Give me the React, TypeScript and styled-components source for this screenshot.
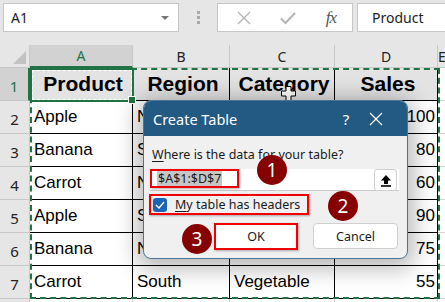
import React from "react";
import styled, { createGlobalStyle } from "styled-components";

const GlobalStyle = createGlobalStyle`
  html, body { margin: 0; padding: 0; }
  body {
    font-family: "Liberation Sans", Arial, sans-serif;
    background: #fff;
  }
`;

const Screen = styled.div`
  position: relative;
  width: 445px;
  height: 302px;
  overflow: hidden;
  background: #fff;
`;

/* ---------- formula bar ---------- */

const Toolbar = styled.div`
  display: flex;
  align-items: flex-start;
  height: 45px;
  padding: 3px 0 0 3px;
  box-sizing: border-box;
  background: #e6e6e6;
`;

const NameBox = styled.div`
  width: 176px;
  height: 29px;
  box-sizing: border-box;
  display: flex;
  align-items: center;
  justify-content: space-between;
  padding: 0 9px 0 7px;
  background: #fff;
  border: 1px solid #c6c6c6;
  font-family: "Noto Sans", sans-serif;
  font-size: 14px;
  color: #222;
`;

const Caret = styled.span`
  width: 0;
  height: 0;
  border-left: 4px solid transparent;
  border-right: 4px solid transparent;
  border-top: 4px solid #777;
`;

const Grip = styled.div`
  width: 38px;
  height: 29px;
  display: flex;
  flex-direction: column;
  align-items: center;
  justify-content: center;
  gap: 2px;
  span {
    width: 3px;
    height: 3px;
    background: #a8a8a8;
  }
`;

const FxButtons = styled.div`
  width: 136px;
  height: 29px;
  box-sizing: border-box;
  display: flex;
  align-items: center;
  justify-content: space-between;
  padding: 0 16px 0 19px;
  background: #fff;
  border: 1px solid #c6c6c6;
`;

const FxLabel = styled.span`
  font-family: "Liberation Serif", serif;
  font-style: italic;
  font-size: 17px;
  color: #555;
  letter-spacing: -1px;
`;

const FormulaInput = styled.div`
  flex: 1;
  height: 29px;
  margin-left: 4px;
  box-sizing: border-box;
  display: flex;
  align-items: center;
  padding-left: 14px;
  background: #fff;
  border: 1px solid #c6c6c6;
  border-right: none;
  font-family: "Noto Sans", sans-serif;
  font-size: 14px;
  color: #222;
`;

/* ---------- sheet ---------- */

const Sheet = styled.div`
  display: grid;
  grid-template-columns: 30px 103px 97px 105px 103px 1fr;
  grid-template-rows: 23px repeat(8, 33px);
`;

const Corner = styled.div`
  background: #e6e6e6;
  border-right: 1px solid #c8c8c8;
  border-bottom: 1px solid #c8c8c8;
  box-sizing: border-box;
  position: relative;
  &::after {
    content: "";
    position: absolute;
    right: 3px;
    bottom: 3px;
    width: 0;
    height: 0;
    border-left: 13px solid transparent;
    border-bottom: 13px solid #c2c2c2;
  }
`;

const ColHead = styled.div<{ $active?: boolean }>`
  display: flex;
  align-items: center;
  justify-content: center;
  box-sizing: border-box;
  background: ${(p) => (p.$active ? "#d2d2d2" : "#e6e6e6")};
  border-right: 1px solid #c8c8c8;
  border-bottom: ${(p) => (p.$active ? "2px solid #217346" : "1px solid #c8c8c8")};
  font-family: "Noto Sans", sans-serif;
  font-size: 14px;
  color: ${(p) => (p.$active ? "#217346" : "#222")};
`;

const RowHead = styled.div<{ $active?: boolean }>`
  display: flex;
  align-items: flex-end;
  justify-content: center;
  padding-bottom: 4px;
  box-sizing: border-box;
  background: ${(p) => (p.$active ? "#d2d2d2" : "#e6e6e6")};
  border-right: ${(p) => (p.$active ? "2px solid #217346" : "1px solid #c8c8c8")};
  border-bottom: 1px solid #c8c8c8;
  font-family: "Noto Sans", sans-serif;
  font-size: 15px;
  color: ${(p) => (p.$active ? "#217346" : "#222")};
`;

const Cell = styled.div<{ $head?: boolean; $num?: boolean; $empty?: boolean }>`
  display: flex;
  align-items: center;
  justify-content: ${(p) => (p.$head ? "center" : p.$num ? "flex-end" : "flex-start")};
  padding: ${(p) => (p.$num ? "0 2px 0 0" : "0 0 0 4px")};
  box-sizing: border-box;
  white-space: nowrap;
  overflow: hidden;
  background: ${(p) => (p.$head ? "#e3e3e3" : "#fff")};
  border-right: 1px solid ${(p) => (p.$empty ? "#d4d4d4" : "#000")};
  border-bottom: 1px solid ${(p) => (p.$empty ? "#d4d4d4" : "#000")};
  font-size: ${(p) => (p.$head ? "21px" : "17px")};
  font-weight: ${(p) => (p.$head ? 700 : 400)};
  color: #000;
`;

const CopyMarquee = styled.div`
  position: absolute;
  left: 30px;
  top: 68px;
  width: 410px;
  height: 231px;
  box-sizing: border-box;
  border: 2px dashed #217346;
  pointer-events: none;
`;

const ActiveCell = styled.div`
  position: absolute;
  left: 30px;
  top: 68px;
  width: 104px;
  height: 34px;
  box-sizing: border-box;
  border: 2px solid #217346;
  outline: 1px dashed #fff;
  outline-offset: -3px;
  &::after {
    content: "";
    position: absolute;
    right: -4px;
    bottom: -4px;
    width: 6px;
    height: 6px;
    background: #217346;
    border: 1px solid #fff;
  }
`;

/* ---------- dialog ---------- */

const Dialog = styled.div`
  position: absolute;
  left: 143px;
  top: 100px;
  width: 265px;
  height: 159px;
  box-sizing: border-box;
  border-radius: 8px;
  border: 1px solid #4d7494;
  background: #f0f0f0;
  overflow: hidden;
  box-shadow: 0 4px 22px 6px rgba(0, 0, 0, 0.28);
  font-family: "Noto Sans", "Open Sans", sans-serif;
  color: #1a1a1a;
`;

const TitleBar = styled.div`
  height: 35px;
  display: flex;
  align-items: center;
  padding: 0 16px 0 9px;
  background: #235a84;
  color: #fff;
  font-size: 14.5px;
`;

const Title = styled.span`
  flex: 1;
`;

const TitleButton = styled.span`
  width: 30px;
  display: flex;
  justify-content: center;
  font-size: 15px;
`;

const Body = styled.div`
  display: flex;
  flex-direction: column;
  padding: 10px 8px 0 6px;
`;

const Prompt = styled.div`
  font-size: 12.5px;
  line-height: 18px;
  margin-left: 2px;
  u {
    text-underline-offset: 2px;
  }
`;

const RangeField = styled.div`
  margin-top: 5px;
  height: 22px;
  display: flex;
  align-items: flex-start;
  justify-content: space-between;
  background: #fff;
  box-sizing: border-box;
  border-bottom: 1px solid #c8c8c8;
`;

const RangeMark = styled.span`
  width: 89px;
  height: 19px;
  box-sizing: border-box;
  display: flex;
  align-items: center;
  padding-left: 5px;
  border: 2px solid #f00000;
  box-shadow: 1px 1px 2px rgba(0, 0, 0, 0.3);
`;

const Selected = styled.span`
  background: #c6c6c6;
  font-size: 12.5px;
  line-height: 15px;
  padding: 0 1px;
`;

const Collapse = styled.span`
  width: 23px;
  height: 22px;
  box-sizing: border-box;
  margin-right: 2px;
  display: flex;
  align-items: center;
  justify-content: center;
  background: #fff;
  border: 1px solid #cfcfcf;
  border-radius: 3px;
`;

const HeaderToggle = styled.label`
  margin-top: 3px;
  margin-left: -1px;
  width: 160px;
  height: 21px;
  box-sizing: border-box;
  display: flex;
  align-items: center;
  gap: 8px;
  padding-left: 2px;
  border: 2px solid #f00000;
  box-shadow: 1px 1px 2px rgba(0, 0, 0, 0.3);
  font-size: 12.5px;
  u {
    text-underline-offset: 2px;
  }
`;

const Check = styled.span`
  width: 14px;
  height: 14px;
  border-radius: 3px;
  background: #1b64b8;
  display: flex;
  align-items: center;
  justify-content: center;
`;

const Actions = styled.div`
  margin-top: 8px;
  display: flex;
  justify-content: flex-end;
  gap: 15px;
  padding-right: 1px;
`;

const Button = styled.button<{ $marked?: boolean }>`
  width: ${(p) => (p.$marked ? "84px" : "85px")};
  height: ${(p) => (p.$marked ? "27px" : "26px")};
  padding: 0;
  box-sizing: border-box;
  background: #fff;
  border: ${(p) => (p.$marked ? "2px solid #f00000" : "1px solid #d0d0d0")};
  border-radius: ${(p) => (p.$marked ? "0" : "4px")};
  box-shadow: ${(p) => (p.$marked ? "1px 1px 2px rgba(0,0,0,0.3)" : "none")};
  font-family: "Noto Sans", "Open Sans", sans-serif;
  font-size: 12.5px;
  color: #1a1a1a;
`;

/* ---------- annotations ---------- */

const Badge = styled.div<{ $x: number; $y: number }>`
  position: absolute;
  left: ${(p) => p.$x - 15}px;
  top: ${(p) => p.$y - 15}px;
  width: 30px;
  height: 30px;
  border-radius: 50%;
  background: #860000;
  color: #fff;
  display: flex;
  align-items: center;
  justify-content: center;
  font-family: "Noto Sans", sans-serif;
  font-size: 19px;
`;

const Cursor = styled.svg`
  position: absolute;
  left: 281px;
  top: 86px;
`;

const columns = ["A", "B", "C", "D", "E"];

const rows: string[][] = [
  ["Product", "Region", "Category", "Sales"],
  ["Apple", "North", "Fruit", "100"],
  ["Banana", "South", "Fruit", "80"],
  ["Carrot", "North", "Vegetable", "60"],
  ["Apple", "South", "Fruit", "90"],
  ["Banana", "North", "Fruit", "75"],
  ["Carrot", "South", "Vegetable", "55"],
];

export default function App() {
  return (
    <Screen>
      <GlobalStyle />
      <Toolbar>
        <NameBox>
          A1
          <Caret />
        </NameBox>
        <Grip>
          <span />
          <span />
          <span />
        </Grip>
        <FxButtons>
          <svg width="14" height="14" viewBox="0 0 14 14">
            <path d="M1 1 L13 13 M13 1 L1 13" stroke="#b4b4b4" strokeWidth="1.4" />
          </svg>
          <svg width="16" height="14" viewBox="0 0 16 14">
            <path d="M1 7.5 L5.5 12 L15 2" stroke="#b4b4b4" strokeWidth="2" fill="none" />
          </svg>
          <FxLabel>fx</FxLabel>
        </FxButtons>
        <FormulaInput>Product</FormulaInput>
      </Toolbar>

      <Sheet>
        <Corner />
        {columns.map((c, i) => (
          <ColHead key={c} $active={i === 0}>
            {c}
          </ColHead>
        ))}
        {rows.map((row, r) => (
          <React.Fragment key={r}>
            <RowHead $active={r === 0}>{r + 1}</RowHead>
            {row.map((v, c) => (
              <Cell key={c} $head={r === 0} $num={c === 3 && r > 0}>
                {v}
              </Cell>
            ))}
            <Cell $empty />
          </React.Fragment>
        ))}
        <RowHead />
        {columns.map((c) => (
          <Cell key={c} $empty />
        ))}
      </Sheet>

      <CopyMarquee />
      <ActiveCell />

      <Cursor width="15" height="15" viewBox="0 0 15 15">
        <path
          d="M5 0.5 H10 V5 H14.5 V10 H10 V14.5 H5 V10 H0.5 V5 H5 Z"
          fill="#fff"
          stroke="#000"
          strokeWidth="1"
        />
      </Cursor>

      <Dialog>
        <TitleBar>
          <Title>Create Table</Title>
          <TitleButton>?</TitleButton>
          <TitleButton>
            <svg width="14" height="14" viewBox="0 0 14 14">
              <path d="M1 1 L13 13 M13 1 L1 13" stroke="#fff" strokeWidth="1.2" />
            </svg>
          </TitleButton>
        </TitleBar>
        <Body>
          <Prompt>
            <u>W</u>here is the data for your table?
          </Prompt>
          <RangeField>
            <RangeMark>
              <Selected>$A$1:$D$7</Selected>
            </RangeMark>
            <Collapse>
              <svg width="12" height="13" viewBox="0 0 12 13">
                <path d="M6 1 L11 6.5 H8 V10 H4 V6.5 H1 Z" fill="#000" />
                <rect x="1" y="11.2" width="10" height="1.6" fill="#000" />
              </svg>
            </Collapse>
          </RangeField>
          <HeaderToggle>
            <Check>
              <svg width="10" height="8" viewBox="0 0 10 8">
                <path d="M1 4 L4 7 L9 1" stroke="#fff" strokeWidth="1.4" fill="none" />
              </svg>
            </Check>
            <span>
              <u>M</u>y table has headers
            </span>
          </HeaderToggle>
          <Actions>
            <Button $marked>OK</Button>
            <Button>Cancel</Button>
          </Actions>
        </Body>
      </Dialog>

      <Badge $x={272} $y={170}>1</Badge>
      <Badge $x={343} $y={206}>2</Badge>
      <Badge $x={197} $y={239}>3</Badge>
    </Screen>
  );
}
